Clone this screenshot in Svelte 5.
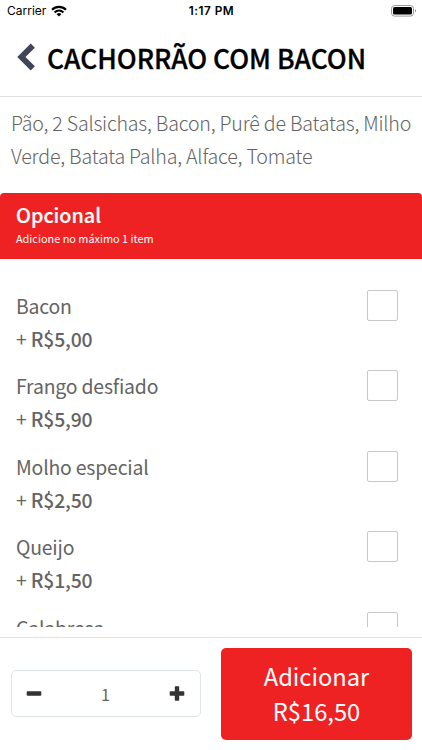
<script lang="ts">
  // Product options screen: extras to pick, quantity and the add button.
  interface Extra {
    name: string;
    price: number;
    checked: boolean;
  }

  const basePrice = 16.5;

  let extras = $state<Extra[]>([
    { name: 'Bacon', price: 5, checked: false },
    { name: 'Frango desfiado', price: 5.9, checked: false },
    { name: 'Molho especial', price: 2.5, checked: false },
    { name: 'Queijo', price: 1.5, checked: false },
    { name: 'Calabresa', price: 3, checked: false },
  ]);
  let quantity = $state(1);

  const extrasPrice = $derived(
    extras.filter((e) => e.checked).reduce((sum, e) => sum + e.price, 0)
  );
  const total = $derived((basePrice + extrasPrice) * quantity);

  function money(value: number) {
    return 'R$' + value.toFixed(2).replace('.', ',');
  }

  // only one extra is allowed
  function toggle(extra: Extra) {
    const next = !extra.checked;
    extras.forEach((e) => (e.checked = false));
    extra.checked = next;
  }
</script>

<div class="screen">
  <div class="status">
    <div class="carrier">
      <span>Carrier</span>
      <svg width="16" height="12" viewBox="0 0 16 12" aria-hidden="true">
        <g fill="none" stroke="#000" stroke-width="2.1">
          <path d="M1 4.7a10 10 0 0 1 14 0" />
          <path d="M3.6 7.4a6.2 6.2 0 0 1 8.8 0" />
        </g>
        <path d="M8 11.6 5.6 9.2a3.4 3.4 0 0 1 4.8 0z" />
      </svg>
    </div>
    <span class="time">1:17 PM</span>
    <svg class="battery" width="26" height="12" viewBox="0 0 26 12" aria-hidden="true">
      <rect x="0.5" y="0.5" width="22" height="10.6" rx="3" fill="none" stroke="#999" />
      <rect x="2" y="2" width="19" height="7.6" rx="1.6" />
      <path d="M24 4v3.6c1.4-.6 1.4-3 0-3.6z" fill="#999" />
    </svg>
  </div>

  <header>
    <button class="back" aria-label="Voltar">
      <svg width="18" height="28" viewBox="0 0 18 28">
        <path d="M15.8 2.6 4.4 14l11.4 11.4" fill="none" stroke="#414558" stroke-width="5.8" />
      </svg>
    </button>
    <h1>CACHORRÃO COM BACON</h1>
  </header>

  <main>
    <p class="description">
      Pão, 2 Salsichas, Bacon, Purê de Batatas, Milho<br />Verde, Batata Palha, Alface, Tomate
    </p>

    <section>
      <div class="group">
        <h2>Opcional</h2>
        <p>Adicione no máximo 1 item</p>
      </div>
      <ul>
        {#each extras as extra}
          <li>
            <div>
              <div class="name">{extra.name}</div>
              <div class="price"><span>+</span> {money(extra.price)}</div>
            </div>
            <button
              class="check"
              class:checked={extra.checked}
              role="checkbox"
              aria-checked={extra.checked}
              aria-label={extra.name}
              onclick={() => toggle(extra)}
            ></button>
          </li>
        {/each}
      </ul>
    </section>
  </main>

  <footer>
    <div class="stepper">
      <button aria-label="Menos" onclick={() => (quantity = Math.max(1, quantity - 1))}>
        <svg width="16" height="16" viewBox="0 0 16 16">
          <rect x="0.7" y="5.3" width="14.6" height="4.4" rx="0.8" fill="#333" />
        </svg>
      </button>
      <span>{quantity}</span>
      <button aria-label="Mais" onclick={() => quantity++}>
        <svg width="16" height="16" viewBox="0 0 16 16" fill="#333">
          <rect x="0.7" y="5.3" width="14.6" height="4.4" rx="0.8" />
          <rect x="5.8" y="0.2" width="4.4" height="14.6" rx="0.8" />
        </svg>
      </button>
    </div>
    <button class="add">
      <span>Adicionar</span>
      <span class="total">{money(total)}</span>
    </button>
  </footer>
</div>

<style>
  .screen {
    display: flex;
    flex-direction: column;
    width: 422px;
    height: 750px;
    overflow: hidden;
    background: #fff;
    color: #646464;
    font-family: 'Noto Sans CJK SC', 'Noto Sans', sans-serif;
  }
  button {
    padding: 0;
    border: 0;
    background: none;
    color: inherit;
    font: inherit;
  }
  h1,
  h2,
  p,
  ul {
    margin: 0;
    padding: 0;
  }
  svg {
    display: block;
  }
  .status {
    display: grid;
    grid-template-columns: 1fr auto 1fr;
    align-items: center;
    flex: none;
    height: 22px;
    padding: 0 5px 0 7px;
    color: #000;
    font-family: Inter, sans-serif;
    font-size: 12px;
    line-height: 22px;
  }
  .carrier {
    display: flex;
    align-items: center;
    gap: 5px;
  }
  .carrier svg {
    margin-bottom: 1px;
  }
  .time {
    padding-right: 1px;
    font-size: 11.8px;
    font-weight: 600;
    letter-spacing: 0.5px;
  }
  .battery {
    justify-self: end;
    margin-bottom: 1px;
  }
  header {
    display: flex;
    align-items: flex-start;
    flex: none;
    box-sizing: border-box;
    height: 75px;
    padding: 19px 0 0 17px;
    border-bottom: 1px solid #e2e2e2;
  }
  .back {
    margin-top: 2px;
  }
  h1 {
    margin-left: 12px;
    color: #000;
    font-size: 26.4px;
    font-weight: 500;
    line-height: 34px;
    white-space: nowrap;
    -webkit-text-stroke: 0.3px #000;
  }
  main {
    flex: none;
    height: 530px;
    overflow: hidden;
  }
  .description {
    padding: 9px 11px 0;
    font-size: 19.6px;
    font-weight: 300;
    letter-spacing: -0.2px;
    line-height: 33px;
    white-space: nowrap;
  }
  .group {
    height: 66px;
    margin-top: 21px;
    padding-left: 16px;
    border-radius: 4px 4px 0 0;
    box-sizing: border-box;
    background: #ee2223;
    color: #fff;
  }
  h2 {
    padding-top: 7px;
    font-size: 19.8px;
    font-weight: 500;
    line-height: 30px;
    -webkit-text-stroke: 0.2px #fff;
  }
  .group p {
    font-size: 10.9px;
    line-height: 17px;
  }
  ul {
    padding: 30px 24px 0 16px;
    list-style: none;
  }
  li {
    display: flex;
    justify-content: space-between;
    height: 80.4px;
  }
  .name,
  .price {
    font-size: 19.4px;
    letter-spacing: -0.18px;
    line-height: 33px;
  }
  .price {
    font-weight: 500;
  }
  .price span {
    font-weight: 400;
  }
  .check {
    width: 31px;
    height: 31px;
    margin-top: 1px;
    border: 1px solid #c8c8c8;
    border-radius: 2px;
    box-sizing: border-box;
  }
  .check.checked {
    background: #ee2223;
  }
  footer {
    display: flex;
    justify-content: space-between;
    align-items: flex-start;
    flex: 1;
    margin-top: 10px;
    padding: 10px 10px 0 11px;
    border-top: 1px solid #e2e2e2;
  }
  .stepper {
    display: flex;
    justify-content: space-between;
    align-items: center;
    width: 190px;
    height: 47px;
    margin-top: 22px;
    padding: 0 15px 0 14px;
    border: 1px solid #dfe6e6;
    border-radius: 5px;
    box-sizing: border-box;
    font-size: 16px;
    line-height: 22px;
  }
  .add {
    display: flex;
    flex-direction: column;
    justify-content: center;
    width: 191px;
    height: 92px;
    border-radius: 5px;
    background: #ee2223;
    color: #fff;
    font-size: 23.7px;
    line-height: 35px;
    text-align: center;
  }
  .add span {
    display: block;
    width: 100%;
  }
</style>
